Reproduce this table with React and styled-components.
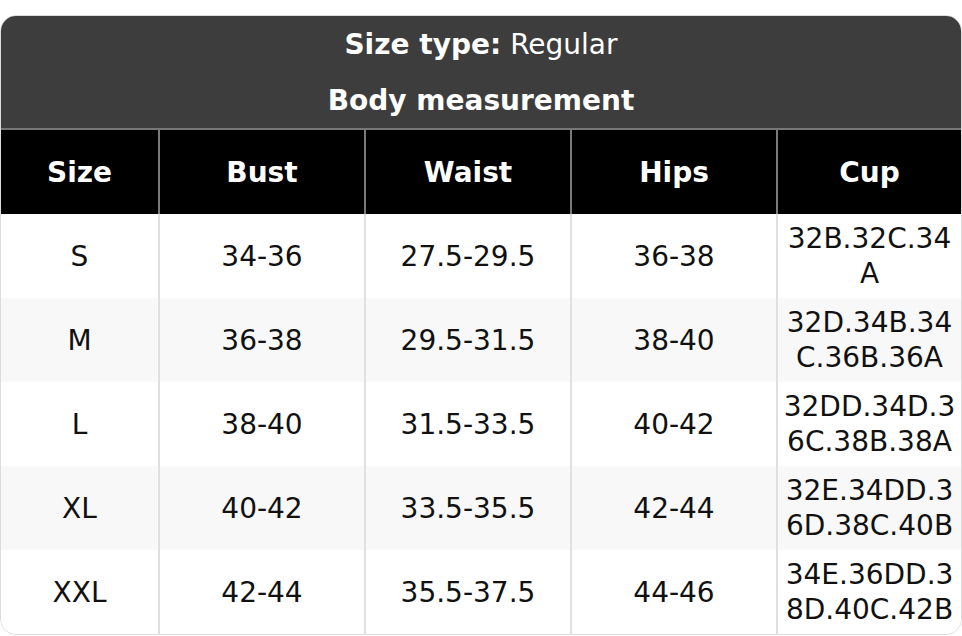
import React from 'react';
import styled, {createGlobalStyle} from 'styled-components';

const GlobalStyle = createGlobalStyle`
  html, body {
    margin: 0;
    padding: 0;
    background: #fff;
  }
  body {
    font-family: "DejaVu Sans", Verdana, sans-serif;
  }
`

const Page = styled.div`
  padding-top: 15px;
`

const Card = styled.div`
  border: 1px solid #dcdcdc;
  border-radius: 16px;
  overflow: hidden;
  background: #fff;
`

const Heading = styled.div`
  background: #3d3d3d;
  color: #fff;
  font-size: 28px;
  border-bottom: 2px solid #777;
`

const HeadingLine = styled.div`
  height: 56px;
  display: flex;
  align-items: center;
  justify-content: center;
  font-weight: ${p => (p.bold ? 700 : 400)};

  b {
    font-weight: 700;
    margin-right: 9px;
  }
`

const Row = styled.div`
  display: grid;
  grid-template-columns: 157px 206px 206px 206px 1fr;
  grid-template-rows: 84px;
  height: 84px;
  background: ${p => (p.head ? '#000' : p.striped ? '#f8f8f8' : '#fff')};
  color: ${p => (p.head ? '#fff' : '#111')};
  font-weight: ${p => (p.head ? 700 : 400)};
`

const Cell = styled.div`
  display: flex;
  align-items: center;
  justify-content: center;
  text-align: center;
  font-size: 28px;
  line-height: 35px;
  padding: 0 2px;
  min-width: 0;
  word-break: break-all;
  border-left: ${p => (p.first ? 'none' : p.head ? '2px solid #7a7a7a' : '2px solid #e0e0e0')};
`

const columns = ['Size', 'Bust', 'Waist', 'Hips', 'Cup']

const rows = [
  ['S', '34-36', '27.5-29.5', '36-38', '32B.32C.34A'],
  ['M', '36-38', '29.5-31.5', '38-40', '32D.34B.34C.36B.36A'],
  ['L', '38-40', '31.5-33.5', '40-42', '32DD.34D.36C.38B.38A'],
  ['XL', '40-42', '33.5-35.5', '42-44', '32E.34DD.36D.38C.40B'],
  ['XXL', '42-44', '35.5-37.5', '44-46', '34E.36DD.38D.40C.42B']
]

function App() {
  return (
    <Page>
      <GlobalStyle />
      <Card>
        <Heading>
          <HeadingLine>
            <b>Size type:</b> Regular
          </HeadingLine>
          <HeadingLine bold>Body measurement</HeadingLine>
        </Heading>
        <Row head>
          {columns.map((c, i) => (
            <Cell key={c} head first={i === 0}>{c}</Cell>
          ))}
        </Row>
        {rows.map((r, ri) => (
          <Row key={r[0]} striped={ri % 2 === 1}>
            {r.map((v, i) => (
              <Cell key={i} first={i === 0}>{v}</Cell>
            ))}
          </Row>
        ))}
      </Card>
    </Page>
  )
}

export default App
